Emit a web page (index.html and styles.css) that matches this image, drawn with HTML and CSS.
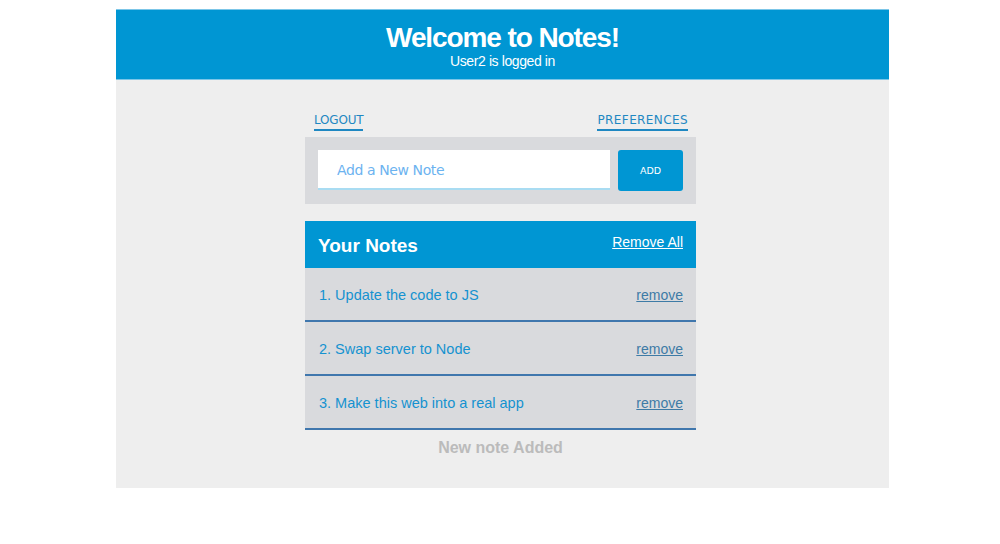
FILE: index.html
```html
<!DOCTYPE html>
<html>
<head>
<meta charset="utf-8">
<link rel="stylesheet" href="styles.css">
</head>
<body>
<div class="app">
  <header class="top">
    <h1 class="title">Welcome to Notes!</h1>
    <div class="sub">User2 is logged in</div>
  </header>
  <main class="main">
    <div class="panel">
      <nav class="links">
        <a class="navlink">LOGOUT</a>
        <a class="navlink navlink-wide">PREFERENCES</a>
      </nav>
      <div class="form">
        <input class="input" type="text" placeholder="Add a New Note">
        <button class="add">ADD</button>
      </div>
      <section class="notes">
        <div class="notes-head">
          <h2 class="notes-title">Your Notes</h2>
          <a class="remove-all">Remove All</a>
        </div>
        <div class="row"><span class="note">1. Update the code to JS</span><a class="remove">remove</a></div>
        <div class="row"><span class="note">2. Swap server to Node</span><a class="remove">remove</a></div>
        <div class="row"><span class="note">3. Make this web into a real app</span><a class="remove">remove</a></div>
      </section>
      <div class="status">New note Added</div>
    </div>
  </main>
</div>
</body>
</html>
```
FILE: styles.css
```css
html, body { margin: 0; padding: 0; background: #fff; }
body { font-family: "Liberation Sans", Arial, sans-serif; }
.app { width: 773px; margin: 9px 0 0 116px; }
.top {
  background: #0096d3;
  border-top: 1px solid #7cc6e8;
  border-bottom: 1px solid #7cc6e8;
  box-sizing: border-box;
  height: 71px;
  text-align: center;
  color: #fff;
  padding-top: 12px;
}
.title { margin: 0; font-size: 28px; line-height: 32px; font-weight: bold; letter-spacing: -1.1px; }
.sub { font-size: 14px; line-height: 16px; margin-top: -1px; letter-spacing: -0.4px; }
.main { background: #eeeeee; height: 408px; padding-top: 30px; box-sizing: border-box; }
.panel { width: 391px; margin-left: 189px; }
.links { display: flex; justify-content: space-between; padding: 0 8px 0 9px; height: 27px; }
.navlink {
  font-family: "DejaVu Sans", Verdana, sans-serif;
  font-size: 12px; color: #1f88c2; line-height: 16px;
  border-bottom: 2px solid #1f88c2; height: 17px; padding-top: 2px;
  letter-spacing: -0.2px;
}
.navlink-wide { letter-spacing: 0.4px; }
.form {
  background: #d9dadd; height: 67px; box-sizing: border-box;
  padding: 13px 13px 0 13px; display: flex; gap: 8px;
}
.input {
  width: 292px; height: 40px; box-sizing: border-box; border: 0;
  border-bottom: 2px solid #a9dcf2; background: #fff; padding: 2px 0 0 19px;
  font-family: "DejaVu Sans", Verdana, sans-serif; font-size: 14px; outline: none;
  letter-spacing: -0.4px;
}
.input::placeholder { color: #6cb3f0; }
.add {
  width: 65px; height: 41px; border: 0; border-radius: 3px; background: #0096d3;
  color: #fff; font-family: "DejaVu Sans", Verdana, sans-serif; font-size: 9.5px; padding: 0;
}
.notes { margin-top: 17px; }
.notes-head {
  background: #0096d3; height: 47px; display: flex; align-items: center;
  justify-content: space-between; padding: 0 13px 0 13px;
}
.notes-title { margin: 0; color: #fff; font-size: 19px; font-weight: bold; margin-top: 2px; }
.remove-all { color: #fff; text-decoration: underline; font-size: 14px; margin-top: -6px; }
.row {
  background: #d9dadd; height: 54px; box-sizing: border-box;
  border-bottom: 2px solid #4077ad; display: flex; align-items: center;
  justify-content: space-between; padding: 2px 13px 0 14px;
}
.note { color: #1592d0; font-size: 14.5px; }
.remove { color: #3e7ba6; font-size: 14px; text-decoration: underline; }
.status { text-align: center; color: #bbbbbb; font-weight: bold; font-size: 16px; margin-top: 9px; }
```
